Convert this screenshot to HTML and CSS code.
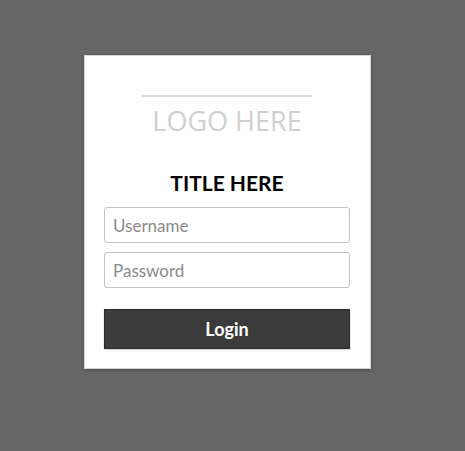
FILE: index.html
```html
<!DOCTYPE html>
<html>
<head>
<meta charset="utf-8">
<link rel="stylesheet" href="styles.css">
</head>
<body>
<div class="card">
  <div class="logo">
    <div class="logo-line"></div>
    <div class="logo-text">LOGO HERE</div>
  </div>
  <h1 class="title">TITLE HERE</h1>
  <form class="form">
    <input class="field" type="text" placeholder="Username">
    <input class="field" type="password" placeholder="Password">
    <button class="btn" type="button">Login</button>
  </form>
</div>
</body>
</html>
```
FILE: styles.css
```css
html, body {
  margin: 0;
  padding: 0;
  background: #666666;
  height: 100%;
}
body {
  padding-top: 55px;
  box-sizing: border-box;
  font-family: Lato, "Open Sans", sans-serif;
}
.card {
  margin-left: 84px;
  width: 287px;
  height: 314px;
  box-sizing: border-box;
  background: #fff;
  border: 1px solid #d6d6d6;
  box-shadow: 0 1px 3px rgba(0,0,0,0.25);
  padding: 39px 20px 0 19px;
}
.logo {
  display: flex;
  flex-direction: column;
  align-items: center;
}
.logo-line {
  width: 171px;
  height: 2px;
  background: #dcdcdc;
  margin-right: 2px;
}
.logo-text {
  font-family: "Open Sans", sans-serif;
  font-size: 27px;
  color: #d0d0d0;
  line-height: 38px;
  margin-top: 5px;
}
.title {
  margin: 30px 0 0;
  text-align: center;
  font-family: Lato, sans-serif;
  font-weight: 700;
  font-size: 21px;
  line-height: 26px;
  color: #000;
}
.form {
  display: flex;
  flex-direction: column;
  margin-top: 11px;
}
.field {
  height: 36px;
  box-sizing: border-box;
  border: 1px solid #c2c2c2;
  border-radius: 3px;
  padding: 0 8px;
  font-family: Lato, sans-serif;
  font-size: 17px;
  color: #333;
  margin-bottom: 9px;
  outline: none;
}
.field::placeholder {
  color: #8a8a8a;
}
.btn {
  margin-top: 12px;
  height: 40px;
  background: #3b3b3b;
  border: 1px solid #2a2a2a;
  color: #fff;
  font-family: Lato, sans-serif;
  font-weight: 700;
  font-size: 18px;
  box-shadow: 0 1px 2px rgba(0,0,0,0.2);
  cursor: pointer;
}
```
